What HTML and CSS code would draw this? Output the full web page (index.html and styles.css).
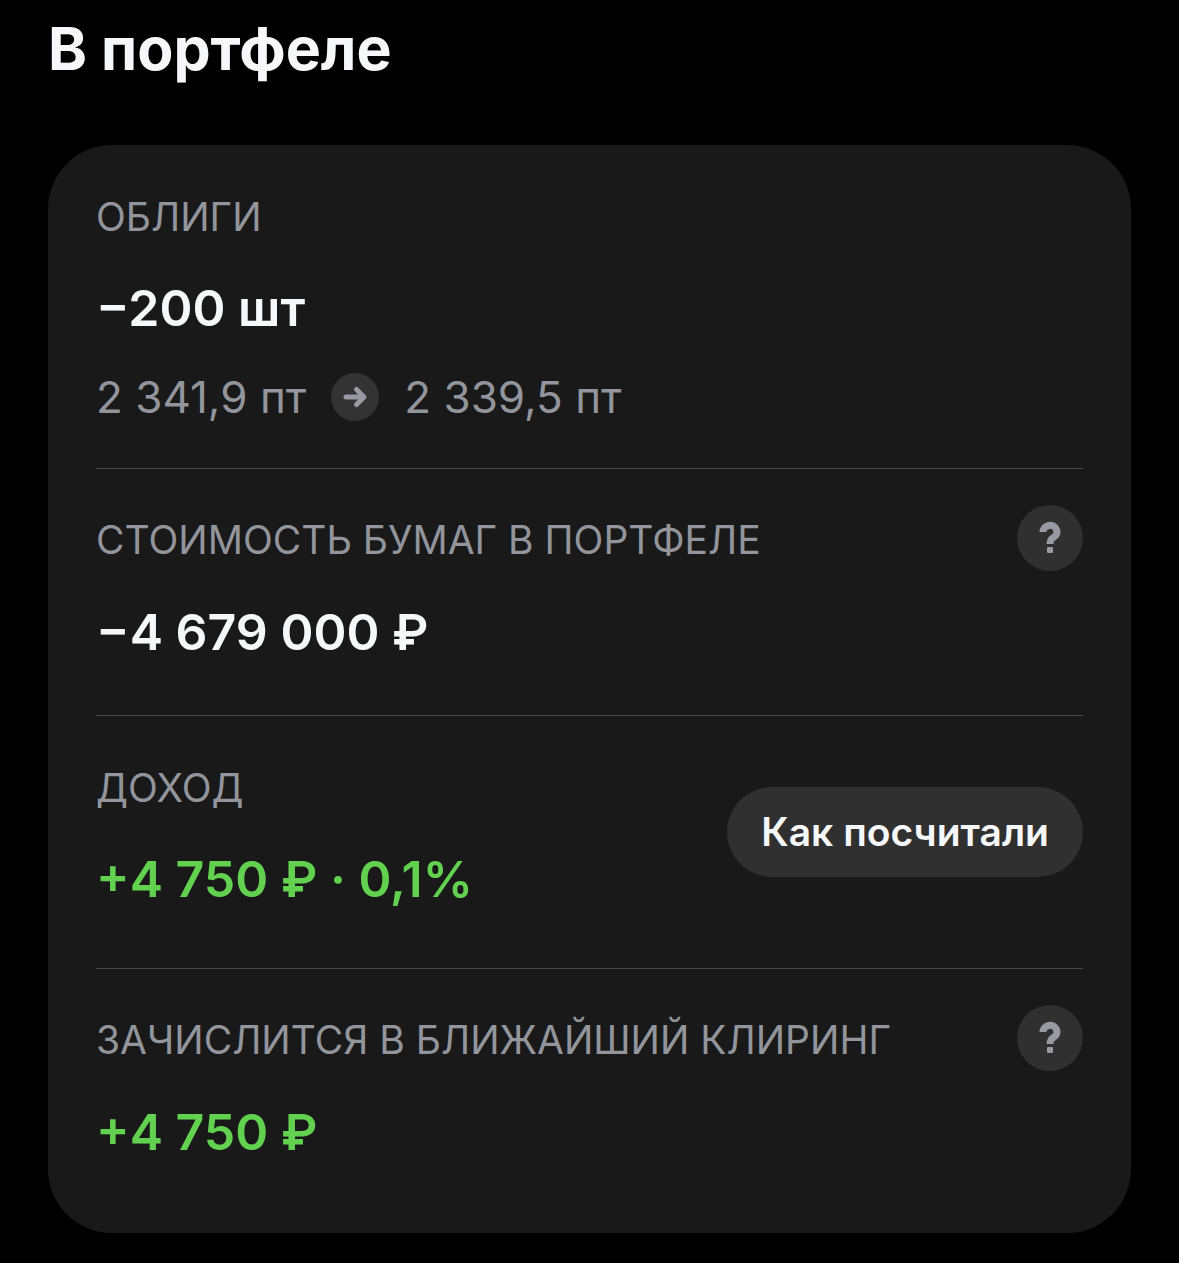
FILE: index.html
```html
<!DOCTYPE html>
<html lang="ru">
<head>
  <meta charset="utf-8">
  <title>В портфеле</title>
  <meta name="viewport" content="width=device-width, initial-scale=1.0">
  <link rel="stylesheet" href="styles.css">
</head>
<body>

  <h1>В портфеле</h1>

  <main class="card">
    <section class="row row-prices">
      <h2 class="label">ОБЛИГИ</h2>
      <p class="value">−200 шт</p>
      <div class="prices">
        <span>2 341,9 пт</span>
        <svg class="arrow" viewBox="0 0 48 48" aria-hidden="true">
          <circle cx="24" cy="24" r="24"/>
          <path d="M15 24H32M25.500 16.500L33 24L25.500 31.500"/>
        </svg>
        <span>2 339,5 пт</span>
      </div>
    </section>

    <section class="row row-help">
      <div class="row-head">
        <h2 class="label">СТОИМОСТЬ БУМАГ В ПОРТФЕЛЕ</h2>
        <button class="help" type="button" aria-label="Подсказка">
          <svg viewBox="0 0 66 66" aria-hidden="true">
            <path d="M26 27a7 6.500 0 1 1 10.500 5.500c-2.500 1.500-3.500 2.500-3.500 6.500"/>
            <rect x="30" y="42" width="6" height="6" rx="1"/>
          </svg>
        </button>
      </div>
      <p class="value">−4 679 000 ₽</p>
    </section>

    <section class="row row-split">
      <div>
        <h2 class="label">ДОХОД</h2>
        <p class="value income">+4 750 ₽ · 0,1%</p>
      </div>
      <button class="pill" type="button">Как посчитали</button>
    </section>

    <section class="row row-help">
      <div class="row-head">
        <h2 class="label">ЗАЧИСЛИТСЯ В БЛИЖАЙШИЙ КЛИРИНГ</h2>
        <button class="help" type="button" aria-label="Подсказка">
          <svg viewBox="0 0 66 66" aria-hidden="true">
            <path d="M26 27a7 6.500 0 1 1 10.500 5.500c-2.500 1.500-3.500 2.500-3.500 6.500"/>
            <rect x="30" y="42" width="6" height="6" rx="1"/>
          </svg>
        </button>
      </div>
      <p class="value income">+4 750 ₽</p>
    </section>
  </main>

</body>
</html>
```
FILE: styles.css
```css
* {
  box-sizing: border-box;
}
body {
  margin: 0;
  padding: 15px 48px 30px;
  background-color: #000;
  color: #f6f7f8;
  font-family: Inter, "Liberation Sans", sans-serif;
}
h1, h2, p {
  margin: 0;
}
h1 {
  margin-bottom: 62px;
  font-size: 59px;
  line-height: 68px;
  font-weight: 700;
}
.card {
  padding: 0 48px 18px;
  background-color: #191919;
  border-radius: 64px;
}
.row {
  padding: 37px 0 57px;
}
.row + .row {
  border-top: 1px solid #484848;
}
.row-prices {
  padding-bottom: 39px;
}
.row-help {
  padding: 36px 0 51px;
}
.label {
  color: #92959c;
  font-size: 39px;
  line-height: 70px;
  font-weight: 400;
}
.value {
  margin-top: 24px;
  font-size: 50px;
  line-height: 64px;
  font-weight: 600;
}
.row-help .value {
  margin-top: 25px;
}
.income {
  color: #62d150;
}
.row-head, .row-split {
  display: flex;
  align-items: center;
  justify-content: space-between;
}
.row-head {
  align-items: flex-start;
}
.prices {
  display: flex;
  align-items: center;
  gap: 25px;
  margin-top: 25px;
  color: #92959c;
  font-size: 44px;
  line-height: 64px;
}
.arrow {
  width: 48px;
  height: 48px;
}
.arrow circle {
  fill: #333;
}
.arrow path {
  fill: none;
  stroke: #9799a3;
  stroke-width: 5;
  stroke-linecap: round;
  stroke-linejoin: round;
}
.help {
  width: 66px;
  height: 66px;
  padding: 0;
  border: none;
  border-radius: 50%;
  background-color: #303030;
}
.help svg {
  display: block;
}
.help path {
  fill: none;
  stroke: #9799a3;
  stroke-width: 7;
}
.help rect {
  fill: #9799a3;
}
.pill {
  padding: 0 34px;
  border: none;
  border-radius: 45px;
  background-color: #303030;
  color: #f6f7f8;
  font: inherit;
  font-size: 39px;
  line-height: 90px;
  font-weight: 600;
}
```
